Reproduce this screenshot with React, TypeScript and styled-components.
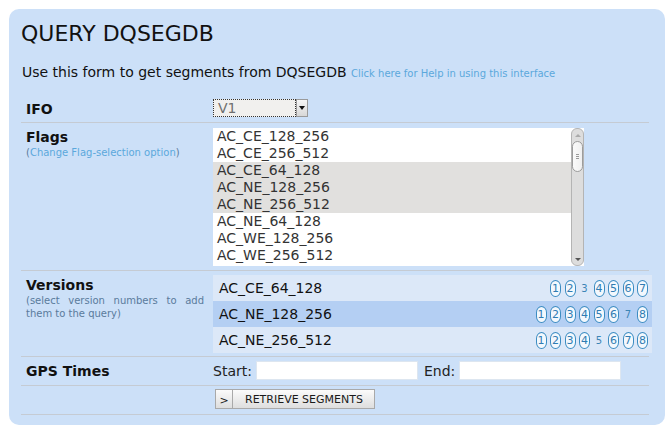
import React from "react";
import styled, { createGlobalStyle } from "styled-components";

const GlobalStyle = createGlobalStyle`
  html, body { margin: 0; padding: 0; background: #ffffff; }
  body { font-family: "DejaVu Sans", Verdana, sans-serif; color: #111; }
  * { box-sizing: border-box; }
`;

const Panel = styled.div`
  margin: 9px;
  width: 656px;
  height: 416px;
  background: #cce0f8;
  border-radius: 10px;
  padding: 12px 16px 0 12px;
`;

const Title = styled.h1`
  margin: 0;
  font-size: 22px;
  line-height: 26px;
  font-weight: normal;
  color: #111;
`;

const Intro = styled.p`
  margin: 17px 0 13px 1px;
  font-size: 14px;
  line-height: 16px;
  color: #111;
`;

const Link = styled.a`
  color: #5ba8dc;
  text-decoration: none;
  font-size: 10px;
`;

const Row = styled.div`
  display: grid;
  grid-template-columns: 192px 1fr;
  border-bottom: 1px solid #c5cbd3;
`;

const LabelCell = styled.div`
  padding: 6px 9px 0 5px;
`;

const Label = styled.div`
  font-weight: bold;
  font-size: 14px;
  line-height: 17px;
  color: #111;
`;

const Sub = styled.div`
  font-size: 10px;
  line-height: 13px;
  color: #5a7b9c;
  text-align: justify;
`;

const ValueCell = styled.div<{ $pt: number; $pb: number }>`
  padding: ${(p) => p.$pt}px 0 ${(p) => p.$pb}px 0;
  display: flex;
  align-items: center;
`;

const SelectBox = styled.div`
  display: flex;
  width: 95px;
  height: 18px;
`;

const SelectField = styled.div`
  flex: 1;
  border: 1px dotted #333;
  background: #f1f0ee;
  color: #707070;
  font-size: 14px;
  line-height: 16px;
  padding-left: 4px;
`;

const SelectButton = styled.div`
  width: 12px;
  border: 1px solid #9a9a9a;
  background: linear-gradient(#f6f6f6, #d8d8d8);
  display: flex;
  align-items: center;
  justify-content: center;
  &::after {
    content: "";
    border-left: 3px solid transparent;
    border-right: 3px solid transparent;
    border-top: 4px solid #111;
  }
`;

const ListBox = styled.div`
  width: 371px;
  height: 138px;
  background: #fff;
  display: flex;
`;

const ListItems = styled.div`
  flex: 1;
`;

const ListItem = styled.div<{ $sel?: boolean }>`
  height: 17px;
  line-height: 17px;
  font-size: 14px;
  padding-left: 4px;
  color: #333;
  background: ${(p) => (p.$sel ? "#e1e0de" : "transparent")};
`;

const Scrollbar = styled.div`
  width: 13px;
  background: #ddd;
  border: 1px solid #b4b4b4;
  border-radius: 6px;
  display: flex;
  flex-direction: column;
  align-items: center;
`;

const Arrow = styled.div<{ $down?: boolean }>`
  height: 12px;
  display: flex;
  align-items: center;
  justify-content: center;
  &::after {
    content: "";
    border-left: 3px solid transparent;
    border-right: 3px solid transparent;
    ${(p) =>
      p.$down ? "border-top: 3px solid #555;" : "border-bottom: 3px solid #aaa;"}
  }
`;

const Thumb = styled.div`
  width: 11px;
  height: 31px;
  background: linear-gradient(90deg, #fafafa, #f0f0f0);
  border: 1px solid #9c9c9c;
  border-radius: 6px;
  display: flex;
  flex-direction: column;
  align-items: center;
  justify-content: center;
  gap: 1px;
  span {
    display: block;
    width: 3px;
    height: 1px;
    background: #999;
  }
`;

const ScrollFill = styled.div`
  flex: 1;
`;

const VersionList = styled.div`
  width: calc(100% + 3px);
  margin-right: -3px;
  display: flex;
  flex-direction: column;
`;

const VersionRow = styled.div<{ $active?: boolean }>`
  height: 26px;
  display: flex;
  align-items: center;
  justify-content: space-between;
  padding: 0 4px 0 6px;
  background: ${(p) => (p.$active ? "#b4cff3" : "#dce8f8")};
  font-size: 14px;
  color: #111;
`;

const Badges = styled.div`
  display: flex;
  align-items: center;
  gap: 3.5px;
`;

const Badge = styled.span`
  width: 11px;
  height: 17px;
  border: 1px solid #3c8cc2;
  border-radius: 6px / 7px;
  background: #f3f8fd;
  color: #2f7cb3;
  font-size: 11px;
  line-height: 15px;
  text-align: center;
`;

const Plain = styled.span`
  width: 11px;
  color: #3c85b6;
  font-size: 10px;
  text-align: center;
`;

const InputLabel = styled.span`
  font-size: 14px;
  color: #222;
  margin-right: 4px;
`;

const TextInput = styled.div`
  width: 162px;
  height: 19px;
  background: #fff;
  border: 1px solid #dde6f0;
  margin-right: 6px;
`;

const Button = styled.div`
  display: flex;
  height: 20px;
  width: 160px;
  margin-left: 2px;
  border: 1px solid #a9a9a9;
  background: linear-gradient(#fbfbfb, #dedede);
  font-size: 11px;
  color: #1a1a1a;
`;

const ButtonIcon = styled.span`
  width: 17px;
  border-right: 1px solid #a9a9a9;
  display: flex;
  align-items: center;
  justify-content: center;
  font-size: 11px;
  padding-top: 2px;
`;

const ButtonText = styled.span`
  flex: 1;
  display: flex;
  align-items: center;
  padding-left: 12px;
`;

const flags = [
  "AC_CE_128_256",
  "AC_CE_256_512",
  "AC_CE_64_128",
  "AC_NE_128_256",
  "AC_NE_256_512",
  "AC_NE_64_128",
  "AC_WE_128_256",
  "AC_WE_256_512",
];
const selected = new Set([2, 3, 4]);

const versions: { name: string; count: number; plain: number; active?: boolean }[] = [
  { name: "AC_CE_64_128", count: 7, plain: 3 },
  { name: "AC_NE_128_256", count: 8, plain: 7, active: true },
  { name: "AC_NE_256_512", count: 8, plain: 5 },
];

export default function App() {
  return (
    <>
      <GlobalStyle />
      <Panel>
        <Title>QUERY DQSEGDB</Title>
        <Intro>
          Use this form to get segments from DQSEGDB <Link href="#">Click here for Help in using this interface</Link>
        </Intro>

        <Row>
          <LabelCell>
            <Label>IFO</Label>
          </LabelCell>
          <ValueCell $pt={4} $pb={5}>
            <SelectBox>
              <SelectField>V1</SelectField>
              <SelectButton />
            </SelectBox>
          </ValueCell>
        </Row>

        <Row>
          <LabelCell>
            <Label>Flags</Label>
            <Sub>
              (<Link href="#">Change Flag-selection option</Link>)
            </Sub>
          </LabelCell>
          <ValueCell $pt={5} $pb={4}>
            <ListBox>
              <ListItems>
                {flags.map((f, i) => (
                  <ListItem key={f} $sel={selected.has(i)}>
                    {f}
                  </ListItem>
                ))}
              </ListItems>
              <Scrollbar>
                <Arrow />
                <Thumb>
                  <span />
                  <span />
                  <span />
                </Thumb>
                <ScrollFill />
                <Arrow $down />
              </Scrollbar>
            </ListBox>
          </ValueCell>
        </Row>

        <Row>
          <LabelCell>
            <Label>Versions</Label>
            <Sub>(select version numbers to add them to the query)</Sub>
          </LabelCell>
          <ValueCell $pt={4} $pb={3}>
            <VersionList>
              {versions.map((v) => (
                <VersionRow key={v.name} $active={v.active}>
                  <span>{v.name}</span>
                  <Badges>
                    {Array.from({ length: v.count }, (_, i) => i + 1).map((n) =>
                      n === v.plain ? <Plain key={n}>{n}</Plain> : <Badge key={n}>{n}</Badge>
                    )}
                  </Badges>
                </VersionRow>
              ))}
            </VersionList>
          </ValueCell>
        </Row>

        <Row>
          <LabelCell>
            <Label>GPS Times</Label>
          </LabelCell>
          <ValueCell $pt={4} $pb={5}>
            <InputLabel>Start:</InputLabel>
            <TextInput />
            <InputLabel>End:</InputLabel>
            <TextInput />
          </ValueCell>
        </Row>

        <Row>
          <LabelCell />
          <ValueCell $pt={3} $pb={5}>
            <Button>
              <ButtonIcon>&gt;</ButtonIcon>
              <ButtonText>RETRIEVE SEGMENTS</ButtonText>
            </Button>
          </ValueCell>
        </Row>
      </Panel>
    </>
  );
}
